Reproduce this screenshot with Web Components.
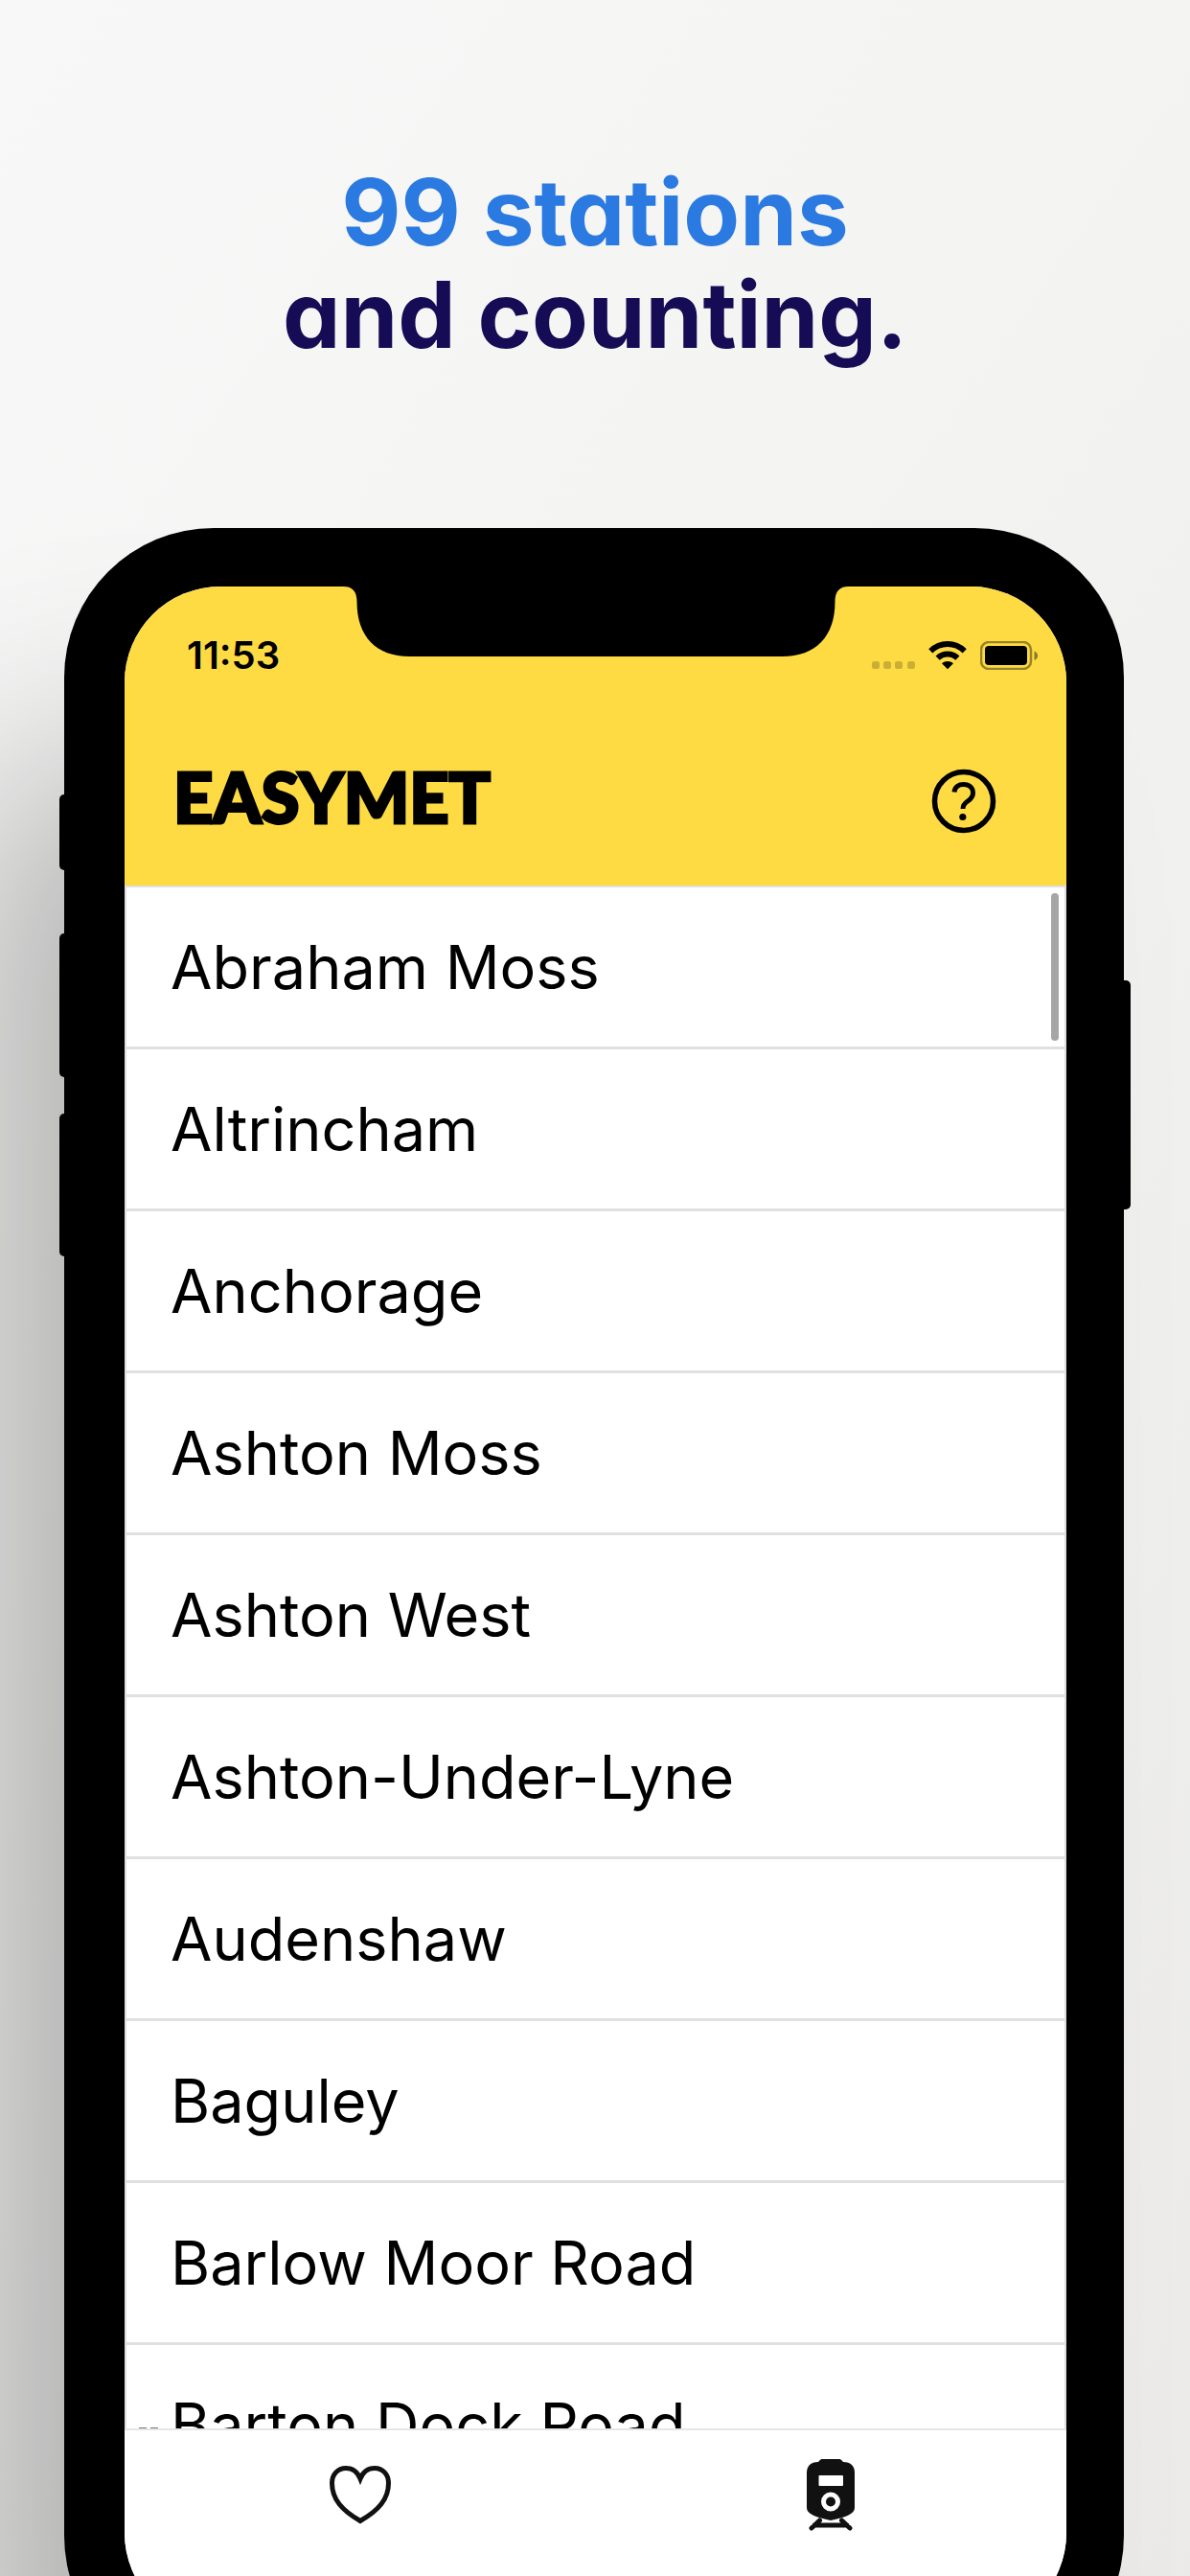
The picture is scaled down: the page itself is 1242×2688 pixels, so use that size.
<!DOCTYPE html>
<html lang="en">
<head>
<meta charset="utf-8">
<meta name="viewport" content="width=device-width, initial-scale=1">
<title>Easymet – 99 stations and counting</title>
<style>
  html, body { margin: 0; }
  body { font-family: Inter, "Liberation Sans", sans-serif; color: #000; }
</style>
</head>
<body>
<promo-stage>
  <promo-headline slot="headline">
    <span slot="lead">99 stations</span>
    <span>and counting.</span>
  </promo-headline>
  <phone-frame>
    <status-bar slot="top" time="11:53"></status-bar>
    <app-header slot="top">EASYMET</app-header>
    <station-list>
      <station-row>Abraham Moss</station-row>
      <station-row>Altrincham</station-row>
      <station-row>Anchorage</station-row>
      <station-row>Ashton Moss</station-row>
      <station-row>Ashton West</station-row>
      <station-row>Ashton-Under-Lyne</station-row>
      <station-row>Audenshaw</station-row>
      <station-row>Baguley</station-row>
      <station-row>Barlow Moor Road</station-row>
      <station-row>Barton Dock Road</station-row>
    </station-list>
    <tab-bar slot="bottom"></tab-bar>
  </phone-frame>
</promo-stage>

<script>
const define = (name, html, setup) => {
  const template = document.createElement('template');
  template.innerHTML = html;
  customElements.define(name, class extends HTMLElement {
    constructor() {
      super();
      this.attachShadow({ mode: 'open' }).append(template.content.cloneNode(true));
    }
    connectedCallback() { if (setup) setup(this, this.shadowRoot); }
  });
};

define('promo-stage', `
  <style>
    :host {
      display: flex; flex-direction: column; box-sizing: border-box;
      height: 100vh; overflow: hidden;
      background: linear-gradient(125deg, #f8f8f8 0%, #f4f4f3 35%, #efefee 70%, #ebeae9 100%);
    }
    ::slotted(promo-headline) { flex: none; }
    ::slotted(phone-frame) { flex: 1; min-height: 0; margin: 0 69px -114px 67px; }
  </style>
  <slot name="headline"></slot>
  <slot></slot>`);

define('promo-headline', `
  <style>
    :host { display: block; height: 551px; box-sizing: border-box; padding-top: 168px; }
    h1 {
      margin: 0; display: flex; flex-direction: column; align-items: center;
      font-size: 96px; line-height: 107px; font-weight: 700; color: #160c56;
      font-feature-settings: "cv11";
    }
    .lead { color: #2b7ae1; }
  </style>
  <h1><span class="lead"><slot name="lead"></slot></span><span><slot></slot></span></h1>`);

define('phone-frame', `
  <style>
    :host {
      position: relative; display: flex; box-sizing: border-box;
      padding: 61px 60px 59px 63px; border-radius: 156px; background: #000;
      box-shadow: -140px 190px 230px -50px rgba(0, 0, 0, .28);
    }
    .screen {
      position: relative; flex: 1; min-width: 0; display: flex; flex-direction: column;
      overflow: hidden; border-radius: 100px; background: #fff;
    }
    .top { background: #fedb43; }
    .notch { position: absolute; top: 0; left: 50%; width: 527px; height: 74px; transform: translateX(-50%); }
    .key { position: absolute; width: 12px; background: #000; border-radius: 5px; }
    .mute { left: -5px; top: 278px; height: 79px; }
    .up { left: -5px; top: 423px; height: 150px; }
    .down { left: -5px; top: 611px; height: 149px; }
    .power { right: -7px; top: 472px; height: 239px; }
  </style>
  <i class="key mute"></i><i class="key up"></i><i class="key down"></i><i class="key power"></i>
  <div class="screen">
    <div class="top"><slot name="top"></slot></div>
    <slot></slot>
    <slot name="bottom"></slot>
    <svg class="notch" viewBox="0 0 527 74" aria-hidden="true">
      <path d="M0 0C10 0 14 6 14 16C14 52 34 73 69 73H458C493 73 513 52 513 16C513 6 517 0 527 0Z"/>
    </svg>
  </div>`);

define('status-bar', `
  <style>
    :host {
      display: flex; align-items: center; justify-content: space-between;
      padding: 48px 30px 0 65px; height: 48px;
    }
    time { font-size: 40px; line-height: 48px; font-weight: 600; }
    .signs { display: flex; align-items: center; gap: 14px; }
    svg { display: block; }
  </style>
  <time></time>
  <div class="signs">
    <svg width="45" height="30" viewBox="0 0 45 30" fill="#000" fill-opacity=".2" aria-hidden="true">
      <rect y="21" width="8" height="8" rx="2.500"/><rect x="12" y="21" width="8" height="8" rx="2.500"/>
      <rect x="24" y="21" width="8" height="8" rx="2.500"/><rect x="37" y="21" width="8" height="8" rx="2.500"/>
    </svg>
    <svg width="40" height="30" viewBox="0 0 40 30" aria-hidden="true">
      <g fill="none" stroke="#000" stroke-width="6">
        <path d="M2.300 10.300C12.500 0.600 27.500 0.600 37.700 10.300"/>
        <path d="M9.600 17.600C15.500 12 24.500 12 30.400 17.600"/>
      </g>
      <path d="M14 23.200C17.500 20.200 22.500 20.200 26 23.200L20 29.200Z"/>
    </svg>
    <svg width="60" height="30" viewBox="0 0 60 30" aria-hidden="true">
      <rect x="1" y="1" width="52" height="28" rx="8" fill="none" stroke="#000" stroke-opacity=".4" stroke-width="2.500"/>
      <rect x="5" y="5" width="44" height="20" rx="4"/>
      <path d="M56.500 10.500C61.200 12 61.200 18.500 56.500 20Z" fill-opacity=".45"/>
    </svg>
  </div>`, (host, root) => { root.querySelector('time').textContent = host.getAttribute('time'); });

define('app-header', `
  <style>
    :host {
      display: flex; align-items: center; justify-content: space-between;
      height: 176px; padding: 40px 73px 0 51px;
    }
    h2 {
      margin: 0; padding-bottom: 10px;
      font: 900 72px/84px Lato, "Liberation Sans", sans-serif;
      -webkit-text-stroke: 3px #000;
    }
    button { display: block; padding: 0; border: 0; background: none; }
    svg { display: block; }
  </style>
  <h2><slot></slot></h2>
  <button type="button" aria-label="Help">
    <svg width="68" height="68" viewBox="0 0 68 68" fill="none" stroke="#000" aria-hidden="true">
      <circle cx="34" cy="34" r="30.500" stroke-width="5.500"/>
      <path d="M24 24.500C24.500 19 28.500 16.500 33.800 16.500C39.500 16.500 43.500 20 43.500 25.500C43.500 29.700 41.200 31.800 38 34C34.700 36.200 33 38 33 42" stroke-width="5"/>
      <circle cx="32.800" cy="50.500" r="3.600" fill="#000" stroke="none"/>
    </svg>
  </button>`);

define('station-list', `
  <style>
    :host {
      position: relative; display: block; flex: 1; min-height: 0; overflow: hidden;
      border: 2px solid #e0e0e0; border-bottom: 0;
    }
    .thumb { position: absolute; top: 6px; right: 6px; width: 8px; height: 154px; border-radius: 4px; background: #a6a6a6; }
    .peek { position: absolute; left: 13px; bottom: 0; width: 20px; height: 1px;
      background: linear-gradient(90deg, #777 8px, transparent 8px 12px, #777 12px); }
  </style>
  <div role="list"><slot></slot></div>
  <i class="thumb"></i><i class="peek"></i>`);

define('station-row', `
  <style>
    :host { display: block; border-bottom: 3px solid #e0e0e0; }
    a {
      display: flex; align-items: center; height: 166px; padding-left: 46px;
      font-size: 63px; line-height: 80px; color: #000; text-decoration: none; white-space: nowrap;
    }
  </style>
  <a href="#"><slot></slot></a>`, host => host.setAttribute('role', 'listitem'));

define('tab-bar', `
  <style>
    :host { display: block; flex: none; border-top: 2px solid #e6e6e6; background: #fff; }
    nav { display: flex; height: 134px; padding-bottom: 73px; }
    button { flex: 1; display: flex; align-items: center; justify-content: center; padding: 0; border: 0; background: none; }
  </style>
  <nav>
    <button type="button" aria-label="Favourites">
      <svg width="66" height="76" viewBox="0 0 66 76" fill="none" stroke="#111" stroke-width="5" aria-hidden="true">
        <path d="M33 21.500C30 14 24.500 10.500 18 10.500C9.500 10.500 3.500 17 3.500 26C3.500 43 14 54.500 33 65.500C52 54.500 62.500 43 62.500 26C62.500 17 56.500 10.500 48 10.500C41.500 10.500 36 14 33 21.500Z"/>
      </svg>
    </button>
    <button type="button" aria-label="Stations" aria-current="page">
      <svg width="52" height="76" viewBox="0 0 52 76" fill="#111" aria-hidden="true">
        <path fill-rule="evenodd" d="M13 4C15 1.500 16 1 18 1H34C36 1 37 1.500 39 4C47 4 51 8.500 51 15V52C51 58 41 62 26 65C11 62 1 58 1 52V15C1 8.500 5 4 13 4ZM14 18Q13.500 18 13.500 19V28Q13.500 29 14.500 29H38Q39 29 39 28V19Q39 18 38 18ZM26 35.500A10 10 0 1 0 26 55.500A10 10 0 1 0 26 35.500Z"/>
        <circle cx="26" cy="45.500" r="5"/>
        <path d="M14.500 65L6 73M37.500 65L46 73M9 70H43" fill="none" stroke="#111" stroke-width="5" stroke-linecap="round"/>
      </svg>
    </button>
  </nav>`);
</script>
</body>
</html>
